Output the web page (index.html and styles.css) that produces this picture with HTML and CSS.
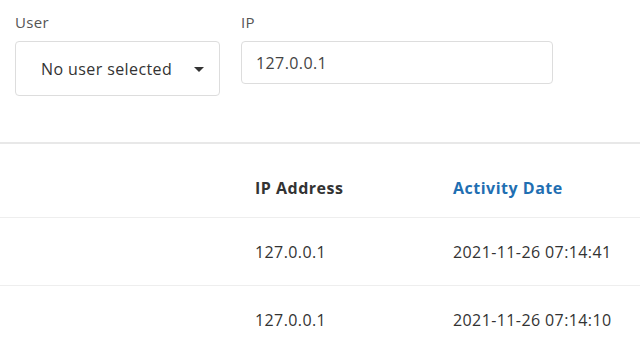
FILE: index.html
```html
<!DOCTYPE html>
<html lang="en">
<head>
    <meta charset="UTF-8">
    <meta name="viewport" content="width=device-width, initial-scale=1.0">
    <title>Activity Log</title>
    <link rel="stylesheet" href="styles.css">
</head>
<body>

<div class="filters">
    <div class="filter filter-user">
        <label class="filter-label">User</label>
        <div class="select-box">
            <span>No user selected</span>
            <span class="caret"></span>
        </div>
    </div>
    <div class="filter filter-ip">
        <label class="filter-label">IP</label>
        <div class="text-input">127.0.0.1</div>
    </div>
</div>

<div class="divider"></div>

<table class="activity-table">
    <thead>
        <tr>
            <th class="col-user"></th>
            <th class="col-ip">IP Address</th>
            <th class="col-date sorted">Activity Date</th>
        </tr>
    </thead>
    <tbody>
        <tr>
            <td></td>
            <td>127.0.0.1</td>
            <td>2021-11-26 07:14:41</td>
        </tr>
        <tr>
            <td></td>
            <td>127.0.0.1</td>
            <td>2021-11-26 07:14:10</td>
        </tr>
    </tbody>
</table>

</body>
</html>
```

FILE: styles.css
```css
body {
    font-family: 'Open Sans', 'Noto Sans', sans-serif;
    color: #333;
    background-color: #fff;
    margin: 0;
    padding: 0;
    letter-spacing: 0.4px;
}

.filters {
    display: flex;
    gap: 21px;
    padding: 12px 15px 0;
}

.filter {
    display: flex;
    flex-direction: column;
}

.filter-label {
    font-size: 15px;
    line-height: 20px;
    color: #555;
    margin-bottom: 9px;
    letter-spacing: 0.3px;
}

.select-box {
    width: 205px;
    height: 55px;
    box-sizing: border-box;
    border: 1px solid #ddd;
    border-radius: 4px;
    display: flex;
    align-items: center;
    justify-content: space-between;
    padding: 0 15px 0 25px;
    font-size: 16px;
    color: #333;
}

.caret {
    width: 0;
    height: 0;
    border-left: 5px solid transparent;
    border-right: 5px solid transparent;
    border-top: 5px solid #333;
    margin-top: 1px;
}

.text-input {
    width: 312px;
    height: 43px;
    box-sizing: border-box;
    border: 1px solid #ddd;
    border-radius: 4px;
    padding: 0 14px;
    display: flex;
    align-items: center;
    font-size: 16px;
    color: #444;
}

.divider {
    height: 2px;
    background-color: #e8e8e8;
    margin-top: 46px;
}

.activity-table {
    width: 100%;
    border-collapse: collapse;
    margin-top: 15px;
    font-size: 16px;
    line-height: 20px;
}

.activity-table th {
    text-align: left;
    font-weight: 700;
    padding: 19px 15px;
    border-bottom: 1px solid #eee;
    color: #333;
    letter-spacing: 0.5px;
}

.activity-table th.sorted {
    color: #1f6fb2;
}

.activity-table td {
    padding: 24px 15px 23px;
    border-bottom: 1px solid #eee;
    color: #333;
}

.col-user {
    width: 210px;
}

.col-ip {
    width: 168px;
}
```
